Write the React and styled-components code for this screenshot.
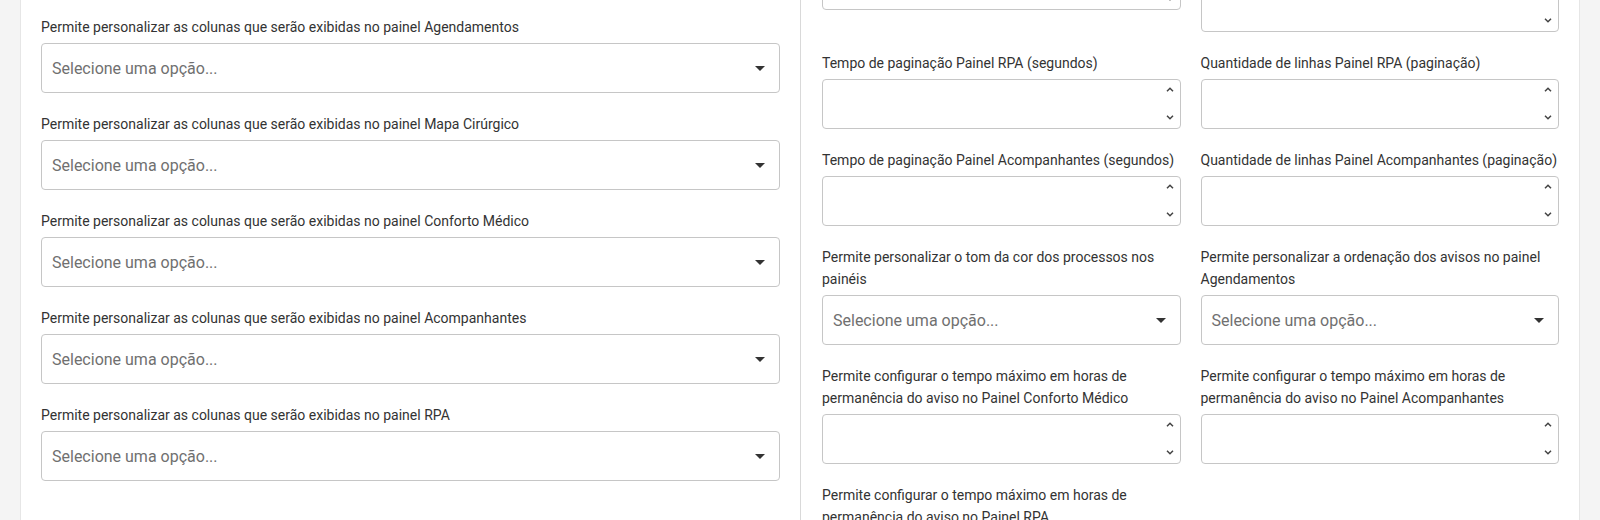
import React from 'react';
import styled, { createGlobalStyle } from 'styled-components';

const GlobalStyle = createGlobalStyle`
  html, body {
    margin: 0;
    padding: 0;
  }
  body {
    background: #f4f4f4;
    font-family: Roboto, "Liberation Sans", Arial, sans-serif;
    height: 520px;
    overflow: hidden;
  }
  * {
    box-sizing: border-box;
  }
`;

const LEFT_FIELDS = [
  'Permite personalizar as colunas que serão exibidas no painel Mapa de Salas',
  'Permite personalizar as colunas que serão exibidas no painel Agendamentos',
  'Permite personalizar as colunas que serão exibidas no painel Mapa Cirúrgico',
  'Permite personalizar as colunas que serão exibidas no painel Conforto Médico',
  'Permite personalizar as colunas que serão exibidas no painel Acompanhantes',
  'Permite personalizar as colunas que serão exibidas no painel RPA',
];

const RIGHT_FIELDS = [
  { label: 'Tempo de paginação Painel Agendamentos (segundos)', type: 'number' },
  { label: 'Quantidade de linhas exibidas por página no Painel Conforto Médico (paginação)', type: 'number' },
  { label: 'Tempo de paginação Painel RPA (segundos)', type: 'number' },
  { label: 'Quantidade de linhas Painel RPA (paginação)', type: 'number' },
  { label: 'Tempo de paginação Painel Acompanhantes (segundos)', type: 'number' },
  { label: 'Quantidade de linhas Painel Acompanhantes (paginação)', type: 'number' },
  { label: 'Permite personalizar o tom da cor dos processos nos painéis', type: 'select' },
  { label: 'Permite personalizar a ordenação dos avisos no painel Agendamentos', type: 'select' },
  { label: 'Permite configurar o tempo máximo em horas de permanência do aviso no Painel Conforto Médico', type: 'number' },
  { label: 'Permite configurar o tempo máximo em horas de permanência do aviso no Painel Acompanhantes', type: 'number' },
  { label: 'Permite configurar o tempo máximo em horas de permanência do aviso no Painel RPA', type: 'number' },
];

const PLACEHOLDER = 'Selecione uma opção...';

const Caret = () => (
  <svg width="10" height="5" viewBox="0 0 10 5" aria-hidden="true">
    <polygon points="0,0 10,0 5,5" fill="#333" />
  </svg>
);

const Chevron = ({ up }) => (
  <svg width="8" height="5" viewBox="0 0 8 5" aria-hidden="true">
    <path
      d={up ? 'M1 4.2 L4 1.2 L7 4.2' : 'M1 0.8 L4 3.8 L7 0.8'}
      fill="none"
      stroke="#444"
      strokeWidth="1.5"
    />
  </svg>
);

const SelectField = () => (
  <SelectBox>
    <span>{PLACEHOLDER}</span>
    <Caret />
  </SelectBox>
);

const NumberField = () => (
  <NumberBox>
    <Spinner>
      <Chevron up />
      <Chevron />
    </Spinner>
  </NumberBox>
);

const Field = ({ label, type }) => (
  <FieldGroup>
    <Label>{label}</Label>
    {type === 'number' ? <NumberField /> : <SelectField />}
  </FieldGroup>
);

const App = () => (
  <>
    <GlobalStyle />
    <Card>
      <Column>
        <Stack>
          {LEFT_FIELDS.map((label) => (
            <Field key={label} label={label} type="select" />
          ))}
        </Stack>
      </Column>
      <Column $divided>
        <FieldGrid>
          {RIGHT_FIELDS.map((f) => (
            <Field key={f.label} label={f.label} type={f.type} />
          ))}
        </FieldGrid>
      </Column>
    </Card>
  </>
);

const Card = styled.div`
  width: 1560px;
  margin: -81px 0 0 20px;
  display: grid;
  grid-template-columns: 1fr 1fr;
  background: #fff;
  border-left: 1px solid #e6e6e6;
  border-right: 1px solid #e6e6e6;
`;

const Column = styled.section`
  min-width: 0;
  padding: ${(p) => (p.$divided ? '14px 20px 40px 21px' : '0 20px 40px 20px')};
  border-left: ${(p) => (p.$divided ? '1px solid #d9d9d9' : 'none')};
`;

const Stack = styled.div`
  display: flex;
  flex-direction: column;
  gap: 20px;
`;

const FieldGrid = styled.div`
  display: grid;
  grid-template-columns: 1fr 1fr;
  column-gap: 20px;
  row-gap: 20px;
  align-items: start;
`;

const FieldGroup = styled.div`
  display: flex;
  flex-direction: column;
`;

const Label = styled.label`
  display: block;
  margin-bottom: 5px;
  font-size: 14px;
  line-height: 22px;
  color: #333;
`;

const SelectBox = styled.div`
  height: 50px;
  display: flex;
  align-items: center;
  justify-content: space-between;
  padding: 0 14px 0 10px;
  border: 1px solid #c6c6c6;
  border-radius: 4px;
  background: #fff;
  font-size: 16px;
  color: #707070;
`;

const NumberBox = styled.div`
  height: 50px;
  display: flex;
  justify-content: flex-end;
  padding: 7px 6px 8px 10px;
  border: 1px solid #c6c6c6;
  border-radius: 4px;
  background: #fff;
`;

const Spinner = styled.div`
  display: flex;
  flex-direction: column;
  justify-content: space-between;
`;

export default App;
